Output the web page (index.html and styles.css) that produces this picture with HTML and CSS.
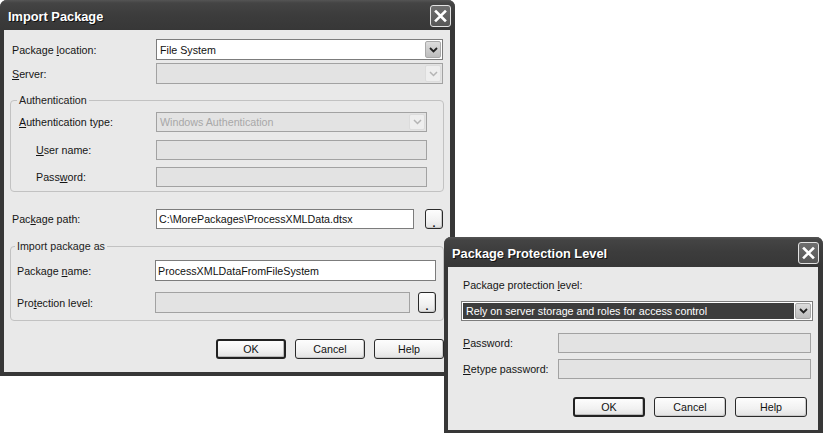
FILE: index.html
```html
<!DOCTYPE html>
<html>
<head>
<meta charset="utf-8">
<title>Import Package</title>
<link rel="stylesheet" href="styles.css">
</head>
<body>
<div class="desk">

  <section class="win win-import">
    <header class="titlebar">
      <span class="title">Import Package</span>
      <span class="close"><svg width="21" height="22" viewBox="0 0 21 22"><path d="M6 6.5 L15 15.5 M15 6.5 L6 15.5" stroke="#fff" stroke-width="2.6" stroke-linecap="square"/></svg></span>
    </header>
    <div class="client client-import">
      <div class="row row-top">
        <span class="lbl lbl-top">Package <u>l</u>ocation:</span>
        <div class="combo combo-top"><span class="val">File System</span><span class="drop"><svg width="9" height="6" viewBox="0 0 9 6"><path d="M1 1 L4.5 4.5 L8 1" fill="none" stroke="#222" stroke-width="1.8"/></svg></span></div>
      </div>
      <div class="row row-top row-gap3">
        <span class="lbl lbl-top"><u>S</u>erver:</span>
        <div class="combo combo-top disabled"><span class="val"></span><span class="drop"><svg width="9" height="6" viewBox="0 0 9 6"><path d="M1 1 L4.5 4.5 L8 1" fill="none" stroke="#b4b4b4" stroke-width="1.5"/></svg></span></div>
      </div>

      <fieldset class="group group-auth">
        <legend>Authentication</legend>
        <div class="row">
          <span class="lbl lbl-auth"><u>A</u>uthentication type:</span>
          <div class="combo combo-auth disabled"><span class="val grey">Windows Authentication</span><span class="drop"><svg width="9" height="6" viewBox="0 0 9 6"><path d="M1 1 L4.5 4.5 L8 1" fill="none" stroke="#b4b4b4" stroke-width="1.5"/></svg></span></div>
        </div>
        <div class="row row-gap8">
          <span class="lbl lbl-auth indent"><u>U</u>ser name:</span>
          <div class="field field-auth disabled"></div>
        </div>
        <div class="row row-gap7">
          <span class="lbl lbl-auth indent">Pass<u>w</u>ord:</span>
          <div class="field field-auth disabled"></div>
        </div>
      </fieldset>

      <div class="row row-path">
        <span class="lbl lbl-top">Pac<u>k</u>age path:</span>
        <div class="field field-path"><span class="val">C:\MorePackages\ProcessXMLData.dtsx</span></div>
        <button class="btn btn-dots btn-dots-path">.</button>
      </div>

      <fieldset class="group group-import">
        <legend>Import package as</legend>
        <div class="row row-h21">
          <span class="lbl lbl-imp">Package <u>n</u>ame:</span>
          <div class="field field-name"><span class="val">ProcessXMLDataFromFileSystem</span></div>
        </div>
        <div class="row row-h21 row-gap11">
          <span class="lbl lbl-imp">Pro<u>t</u>ection level:</span>
          <div class="field field-prot disabled"></div>
          <button class="btn btn-dots btn-dots-prot">.</button>
        </div>
      </fieldset>

      <div class="buttons buttons-import">
        <button class="btn btn-default">OK</button>
        <button class="btn">Cancel</button>
        <button class="btn">Help</button>
      </div>
    </div>
  </section>

  <section class="win win-protect">
    <header class="titlebar">
      <span class="title">Package Protection Level</span>
      <span class="close"><svg width="21" height="22" viewBox="0 0 21 22"><path d="M6 6.5 L15 15.5 M15 6.5 L6 15.5" stroke="#fff" stroke-width="2.6" stroke-linecap="square"/></svg></span>
    </header>
    <div class="client client-protect">
      <div class="plabel">Package protection <u>l</u>evel:</div>
      <div class="combo combo-sel"><span class="val">Rely on server storage and roles for access control</span><span class="drop"><svg width="9" height="6" viewBox="0 0 9 6"><path d="M1 1 L4.5 4.5 L8 1" fill="none" stroke="#222" stroke-width="1.8"/></svg></span></div>
      <div class="row prow prow-first">
        <span class="lbl lbl-p"><u>P</u>assword:</span>
        <div class="field field-p disabled"></div>
      </div>
      <div class="row prow prow-second">
        <span class="lbl lbl-p"><u>R</u>etype password:</span>
        <div class="field field-p disabled"></div>
      </div>
      <div class="buttons buttons-protect">
        <button class="btn btn-default btn-w72">OK</button>
        <button class="btn btn-w72">Cancel</button>
        <button class="btn btn-w72">Help</button>
      </div>
    </div>
  </section>

</div>
</body>
</html>
```

FILE: styles.css
```css
* { box-sizing: border-box; }

body {
  margin: 0;
  background: #ffffff;
  font-family: "Liberation Sans", Arial, sans-serif;
  font-size: 10.7px;
  color: #151515;
}

u { text-decoration: underline; text-underline-offset: 1px; }

.desk {
  position: relative;
  width: 823px;
  height: 433px;
  overflow: hidden;
}

/* ---------- windows ---------- */
.win {
  position: absolute;
  background: #373737;
  border-radius: 7px 7px 0 0;
  box-shadow: inset 0 1px 0 #6a6a6a;
}
.win-import { left: 0; top: 0; width: 455px; padding-bottom: 4px; }
.win-protect { left: 444px; top: 237px; width: 379px; padding-bottom: 3px; }

.titlebar {
  height: 30px;
  display: flex;
  align-items: center;
  justify-content: space-between;
  padding: 0 4px 0 8px;
  border-radius: 7px 7px 0 0;
  background: linear-gradient(#545454 0px, #444444 3px, #3c3c3c 15px, #373737 30px);
}
.title {
  color: #ffffff;
  font-weight: bold;
  font-size: 12.8px;
  letter-spacing: 0;
  text-shadow: 1px 1px 0 #111;
  padding-top: 2px;
}
.close {
  width: 21px;
  height: 22px;
  border: 1px solid #e2e2e2;
  border-radius: 3px;
  background: linear-gradient(#6e6e6e, #575757);
  display: flex;
  align-items: center;
  justify-content: center;
  margin-top: 1px;
}
.close svg { display: block; margin: -1px; }

.client {
  margin: 0 5px 0 4px;
  background: #e9e9e9;
}
.client-import { padding: 9px 0 13px 0; }
.client-protect { padding: 12px 0 13px 0; height: 163px; }

/* ---------- rows ---------- */
.row {
  display: flex;
  align-items: center;
  height: 20px;
}
.row-top { height: 21px; padding-left: 8px; }
.row-gap3 { margin-top: 3px; }
.row-gap7 { margin-top: 7px; }
.row-gap8 { margin-top: 8px; }
.row-gap11 { margin-top: 11px; }
.row-h21 { height: 21px; }

.lbl { flex: none; white-space: nowrap; }
.lbl-top { width: 144px; }
.lbl-auth { width: 137px; }
.lbl-imp { width: 138px; }
.lbl-p { width: 95px; }
.indent { padding-left: 17px; }

/* ---------- inputs ---------- */
.field, .combo {
  flex: none;
  height: 100%;
  border: 1px solid #7c7c7c;
  background: #ffffff;
  display: flex;
  align-items: center;
  padding-left: 2px;
}
.field.disabled, .combo.disabled {
  background: #e3e3e3;
  border-color: #a2a2a2;
}
.val { white-space: nowrap; color: #111; }
.val.grey { color: #a8a8a8; }

.combo { justify-content: space-between; padding: 1px; padding-left: 3px; }
.drop {
  width: 16px;
  height: 100%;
  border: 1px solid #a9a9a9;
  border-radius: 2px;
  background: linear-gradient(#dcdcdc, #bdbdbd);
  display: flex;
  align-items: center;
  justify-content: center;
}
.drop svg { display: block; }
.disabled .drop {
  background: #eeeeee;
  border-color: #dcdcdc;
}

.combo-top { width: 287px; }
.combo-auth { width: 271px; }
.field-auth { width: 271px; }

.row-path { height: 20px; padding-left: 8px; margin-top: 17px; }
.field-path { width: 258px; }
.field-name { width: 281px; }
.field-prot { width: 255px; }

/* ---------- groups ---------- */
.group {
  margin: 0 0 0 6px;
  width: 434px;
  min-width: 0;
  border: 1px solid #c2c2c2;
  border-radius: 4px;
}
.group legend {
  padding: 0 2px;
  margin-left: -2px;
  line-height: 13px;
  color: #222;
}
.group-auth { margin-top: 10px; padding: 5px 0 4px 8px; }
.group-import { margin-top: 11px; padding: 7px 0 7px 6px; }

/* ---------- buttons ---------- */
.btn {
  font-family: inherit;
  font-size: 10.7px;
  color: #111;
  width: 70px;
  height: 20px;
  padding: 0;
  border: 1px solid #2a2a2a;
  border-radius: 3px;
  background: linear-gradient(#fdfdfd, #f1f1f1 60%, #e2e2e2);
  box-shadow: inset -1px -1px 0 #c9c9c9;
  flex: none;
}
.btn-default {
  border: 2px solid #222;
  box-shadow: inset -1px -1px 0 #b9b9b9;
}
.btn-w72 { width: 72px; }
.btn-dots {
  width: 18px;
  height: 20px;
  line-height: 20px;
  font-weight: bold;
  padding-top: 3px;
}
.btn-dots-path { margin-left: 11px; }
.btn-dots-prot { margin-left: 8px; height: 21px; }

.buttons {
  display: flex;
  justify-content: flex-end;
  gap: 9px;
}
.buttons-import { margin-top: 18px; padding-right: 6px; }
.buttons-protect { margin-top: 18px; padding-right: 11px; }

/* ---------- protection dialog ---------- */
.plabel { padding-left: 15px; line-height: 13px; }
.combo-sel {
  margin: 9px 0 0 13px;
  width: 352px;
  height: 20px;
  border-color: #7c7c7c;
  background: #ffffff;
  padding: 1px;
}
.combo-sel .val {
  flex: 1;
  height: 100%;
  background: #3d3d3d;
  color: #ffffff;
  display: flex;
  align-items: center;
  padding-left: 3px;
  margin-right: 1px;
}
.prow { padding-left: 15px; }
.prow-first { margin-top: 12px; }
.prow-second { margin-top: 6px; }
.field-p { width: 253px; }
```
